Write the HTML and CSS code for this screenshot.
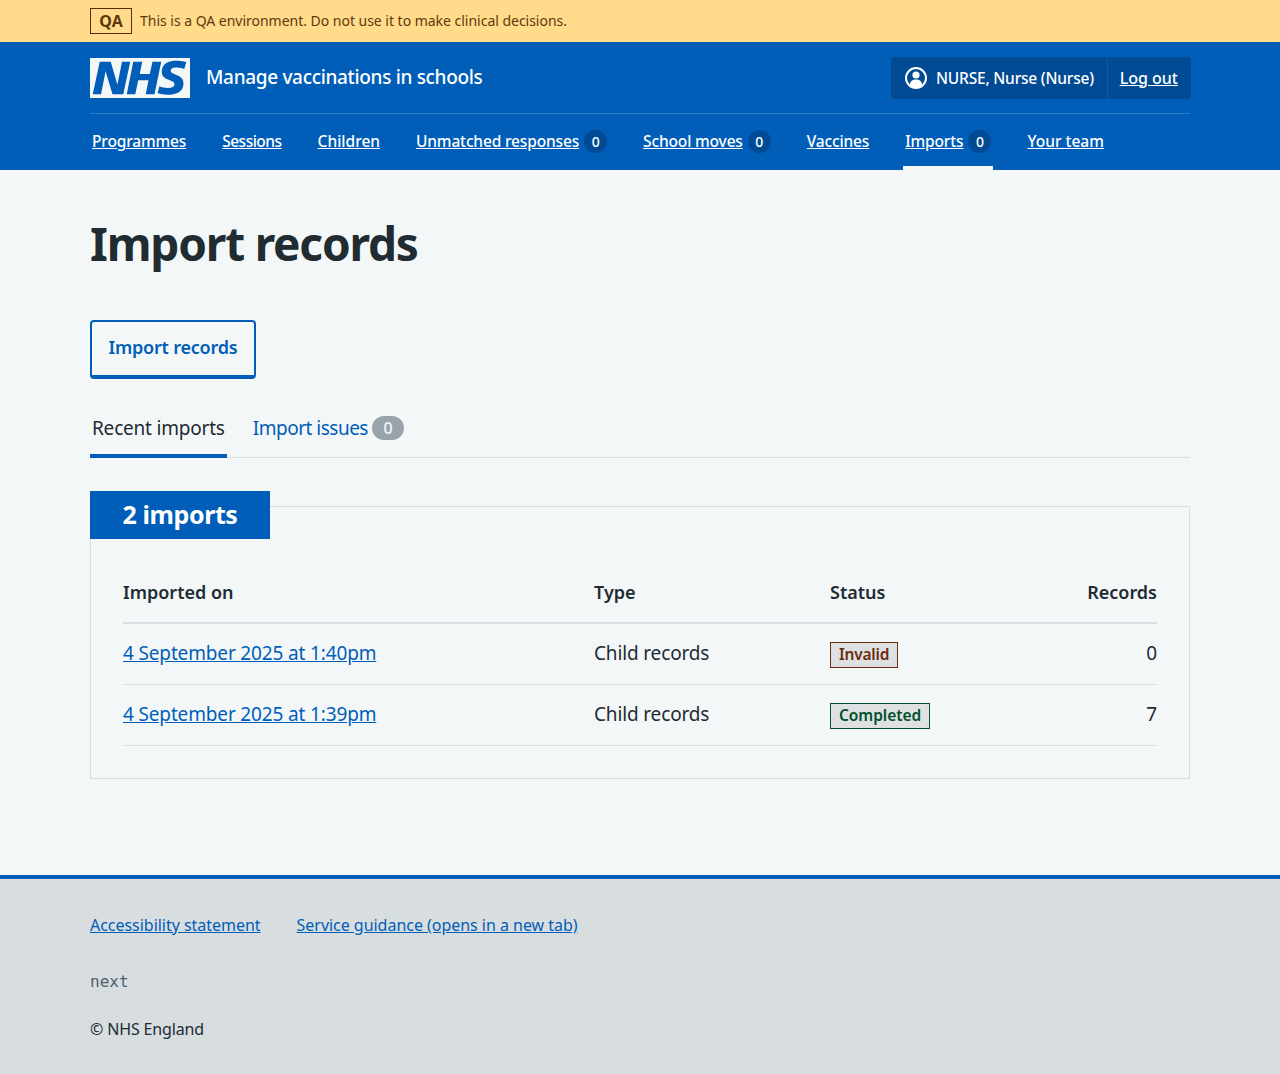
FILE: index.html
```html
<!DOCTYPE html>
<html lang="en">
<head>
  <meta charset="UTF-8">
  <meta name="viewport" content="width=device-width, initial-scale=1.0">
  <title>Import records</title>
  <link rel="stylesheet" href="styles.css">
</head>
<body>

<div class="env-banner">
  <div class="container env-banner-inner">
    <strong class="env-tag">QA</strong>
    <span>This is a QA environment. Do not use it to make clinical decisions.</span>
  </div>
</div>

<header class="header">
  <div class="container">
    <div class="header-top">
      <a class="brand" href="#">
        <svg class="logo" viewBox="0 0 40 16" aria-label="NHS">
          <path fill="#f4f7f8" d="M0 0h40v16H0z"/>
          <path fill="#005eb8" d="M3.9 1.500h4.400l2.600 9h.1l1.800-9h3.300l-2.800 13H9l-2.700-9h-.1l-1.800 9H1.100M17.300 1.500h3.600l-1 4.900h4L25 1.500h3.500l-2.700 13h-3.500l1.100-5.600h-4.100l-1.200 5.600h-3.400M37.700 4.400c-.7-.3-1.600-.6-2.900-.6-1.400 0-2.500.2-2.500 1.300 0 1.800 5.100 1.200 5.100 5.100 0 3.600-3.300 4.500-6.400 4.500-1.300 0-2.900-.3-4-.7l.8-2.700c.7.4 2.100.7 3.200.7s2.800-.2 2.800-1.500c0-2.100-5.100-1.300-5.100-5 0-3.400 2.900-4.400 5.800-4.400 1.600 0 3.100.2 4 .6"/>
        </svg>
        <span class="service-name">Manage vaccinations in schools</span>
      </a>
      <div class="account">
        <div class="account-user">
          <svg class="account-icon" viewBox="0 0 24 24" aria-hidden="true">
            <circle cx="12" cy="12" r="10" fill="none" stroke="#fff" stroke-width="2"/>
            <circle cx="12" cy="9" r="3.600" fill="#fff"/>
            <path fill="#fff" d="M5.800 19c.3-3.600 2.800-5.400 6.200-5.400s5.900 1.800 6.200 5.400c-1.700 1.600-3.900 2.500-6.200 2.500s-4.500-.9-6.200-2.500z"/>
          </svg>
          <span class="account-name">NURSE, Nurse (Nurse)</span>
        </div>
        <a class="account-link" href="#">Log out</a>
      </div>
    </div>
    <nav class="nav">
      <a class="nav-item" href="#"><span class="nav-label">Programmes</span></a>
      <a class="nav-item" href="#"><span class="nav-label nav-label-tight">Sessions</span></a>
      <a class="nav-item" href="#"><span class="nav-label nav-label-wide">Children</span></a>
      <a class="nav-item" href="#"><span class="nav-label">Unmatched responses</span><span class="nav-count">0</span></a>
      <a class="nav-item" href="#"><span class="nav-label">School moves</span><span class="nav-count">0</span></a>
      <a class="nav-item" href="#"><span class="nav-label">Vaccines</span></a>
      <a class="nav-item nav-item-current" href="#"><span class="nav-label">Imports</span><span class="nav-count">0</span></a>
      <a class="nav-item" href="#"><span class="nav-label nav-label-wide">Your team</span></a>
    </nav>
  </div>
</header>

<main class="container main">
  <h1>Import records</h1>

  <a class="button" href="#">Import records</a>

  <div class="tabs">
    <a class="tab tab-current" href="#">Recent imports</a>
    <a class="tab" href="#"><span class="tab-label">Import issues</span><span class="tab-count">0</span></a>
  </div>

  <section class="card">
    <h2 class="card-heading">2 imports</h2>
    <table class="table">
      <thead>
        <tr>
          <th class="col-date">Imported on</th>
          <th class="col-type">Type</th>
          <th class="col-status">Status</th>
          <th class="col-records">Records</th>
        </tr>
      </thead>
      <tbody>
        <tr>
          <td><a href="#">4 September 2025 at 1:40pm</a></td>
          <td>Child records</td>
          <td><strong class="status status-invalid">Invalid</strong></td>
          <td class="col-records">0</td>
        </tr>
        <tr>
          <td><a href="#">4 September 2025 at 1:39pm</a></td>
          <td>Child records</td>
          <td><strong class="status status-completed">Completed</strong></td>
          <td class="col-records">7</td>
        </tr>
      </tbody>
    </table>
  </section>
</main>

<footer class="footer">
  <div class="container">
    <div class="footer-links">
      <a href="#">Accessibility statement</a>
      <a href="#">Service guidance (opens in a new tab)</a>
    </div>
    <div class="footer-version">next</div>
    <p class="footer-copy">© NHS England</p>
  </div>
</footer>

</body>
</html>
```

FILE: styles.css
```css
* {
  box-sizing: border-box;
}

body {
  font-family: 'Noto Sans', sans-serif;
  font-size: 19px;
  line-height: 28px;
  color: #212b32;
  background-color: #f4f7f8;
  margin: 0;
}

a {
  color: #005eb8;
}

.container {
  width: 1100px;
  margin: 0 auto;
}

.env-banner {
  background-color: #ffdb8b;
  color: #5e3a0b;
  height: 42px;
  font-size: 14px;
}

.env-banner-inner {
  display: flex;
  align-items: center;
  gap: 8px;
  height: 42px;
  padding-bottom: 1px;
  letter-spacing: -0.02px;
}

.env-tag {
  border: 1px solid #5e2a0b;
  width: 42px;
  height: 26px;
  line-height: 24px;
  text-align: center;
  font-size: 16px;
}

.header {
  background-color: #005eb8;
  color: #fff;
  height: 128px;
}

.header a {
  color: #fff;
}

.header-top {
  display: flex;
  justify-content: space-between;
  align-items: center;
  height: 72px;
  border-bottom: 1px solid #2b7cc9;
}

.brand {
  display: flex;
  align-items: center;
  gap: 16px;
  text-decoration: none;
}

.logo {
  width: 100px;
  height: 40px;
  display: block;
}

.service-name {
  font-size: 19px;
  font-weight: 500;
  letter-spacing: -0.33px;
  padding-bottom: 2px;
}

.account {
  display: flex;
  align-items: center;
  width: 300px;
  height: 42px;
  margin-right: -1px;
  background-color: #004b93;
  border-radius: 4px;
  font-size: 16px;
  font-weight: 500;
}

.account-user {
  display: flex;
  align-items: center;
  gap: 8px;
  height: 42px;
  padding: 0 0 0 13px;
  border-right: 1px solid #0a5aa8;
  flex: 1;
}

.account-name {
  white-space: nowrap;
  font-size: 15.5px;
  letter-spacing: -0.2px;
}

.account-icon {
  width: 24px;
  height: 24px;
}

.account-link {
  padding: 0 13px 0 12px;
}

.nav {
  display: flex;
  height: 56px;
  font-size: 15.5px;
  font-weight: 500;
  letter-spacing: -0.15px;
}

.nav-item {
  display: flex;
  align-items: center;
  gap: 5px;
  padding: 0 2px 2px;
  margin-right: 32px;
  height: 56px;
  text-decoration: none;
}

.nav-label {
  text-decoration: underline;
}

.nav-label-tight {
  letter-spacing: -0.5px;
}

.nav-label-wide {
  letter-spacing: 0;
}

.nav-count {
  width: 23px;
  height: 23px;
  line-height: 23px;
  text-align: center;
  border-radius: 50%;
  background-color: #004b93;
  font-size: 14px;
}

.nav-item-current {
  box-shadow: inset 0 -4px 0 #f4f7f8;
}

.main {
  padding-top: 39px;
  height: 705px;
}

h1 {
  font-size: 46px;
  line-height: 68px;
  font-weight: 700;
  letter-spacing: -1.2px;
  margin: 0 0 43px;
}

.button {
  display: inline-block;
  height: 59px;
  width: 166px;
  line-height: 50px;
  text-align: center;
  font-size: 18px;
  font-weight: 600;
  letter-spacing: -0.2px;
  text-decoration: none;
  border: 2px solid #005eb8;
  border-bottom-width: 4px;
  border-radius: 4px;
}

.tabs {
  display: flex;
  gap: 24px;
  height: 59px;
  margin: 20px 0 33px;
  border-bottom: 1px solid #d8dde0;
}

.tab {
  display: flex;
  align-items: center;
  height: 59px;
  padding: 3px 2px 4px;
  text-decoration: none;
  letter-spacing: -0.2px;
}

.tab-current {
  color: #212b32;
  border-bottom: 4px solid #005eb8;
  padding-bottom: 0;
}

.tab-label {
  letter-spacing: -0.5px;
}

.tab-count {
  width: 32px;
  height: 24px;
  line-height: 24px;
  margin-left: 4px;
  text-align: center;
  border-radius: 12px;
  background-color: #99a3aa;
  color: #f4f7f8;
  font-size: 16px;
  font-weight: 500;
}

.card {
  position: relative;
  height: 273px;
  margin-top: 48px;
  padding: 55px 32px 0;
  border: 1px solid #d8dde0;
}

.card-heading {
  position: absolute;
  left: -1px;
  top: -16px;
  width: 180px;
  height: 48px;
  margin: 0;
  line-height: 46px;
  text-align: center;
  font-size: 25px;
  font-weight: 700;
  letter-spacing: -0.4px;
  color: #fff;
  background-color: #005eb8;
}

.table {
  width: 100%;
  border-collapse: separate;
  border-spacing: 0;
  table-layout: fixed;
}

.table th {
  text-align: left;
  font-size: 18px;
  font-weight: 600;
  height: 62px;
  padding: 0;
  border-bottom: 2px solid #d8dde0;
}

.table td {
  height: 61px;
  padding: 0 0 2px;
  border-bottom: 1px solid #d8dde0;
  letter-spacing: -0.15px;
}

.col-date {
  width: 471px;
}

.col-type {
  width: 236px;
}

.table .col-records {
  text-align: right;
}

.status {
  display: inline-block;
  height: 26px;
  line-height: 22px;
  margin-top: 2px;
  padding: 0 8px;
  border: 1px solid;
  font-size: 15.5px;
  font-weight: 600;
  letter-spacing: -0.05px;
  background-color: #dee0e2;
  vertical-align: middle;
}

.status-invalid {
  color: #6b2c0d;
  border-color: #6b2c0d;
  letter-spacing: -0.2px;
}

.status-completed {
  color: #00512d;
  border-color: #00512d;
}

.footer {
  height: 199px;
  background-color: #d8dde0;
  border-top: 4px solid #005eb8;
  padding-top: 32px;
  font-size: 16px;
}

.footer-links {
  display: flex;
  gap: 36px;
  height: 28px;
  letter-spacing: -0.03px;
}

.footer-version {
  font-family: 'DejaVu Sans Mono', monospace;
  font-size: 16px;
  color: #4c6272;
  margin-top: 29px;
}

.footer-copy {
  margin: 19px 0 0;
  letter-spacing: -0.15px;
}
```
